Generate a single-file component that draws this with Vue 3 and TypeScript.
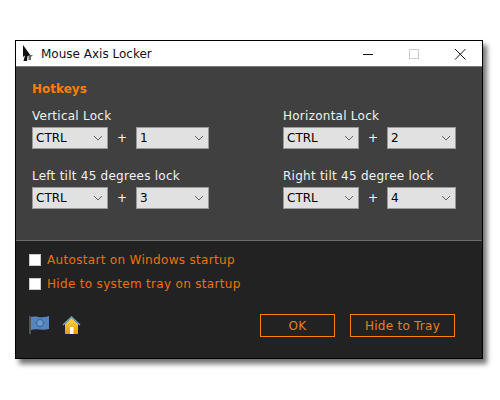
<script setup lang="ts">
const locks = [
  { label: "Vertical Lock", key: "1", keyClass: "key" },
  { label: "Horizontal Lock", key: "2", keyClass: "key-short" },
  { label: "Left tilt 45 degrees lock", key: "3", keyClass: "key" },
  { label: "Right tilt 45 degree lock", key: "4", keyClass: "key-short" },
];
const options = ["Autostart on Windows startup", "Hide to system tray on startup"];
</script>

<template>
  <div class="page">
    <div class="window">
      <div class="titlebar">
        <svg class="app-icon" width="12" height="17" viewBox="0 0 12 17">
          <path d="M1 0 L1 12 L3 10.500 L1.500 16 L5 16 L5.500 11 L9 11 Z" fill="#111" />
          <path d="M6.500 10 H11 L9 12 V15 H6.500 Z" fill="#666" />
        </svg>
        <span class="title">Mouse Axis Locker</span>
        <div class="controls">
          <svg width="14" height="14" viewBox="0 0 14 14"><path d="M2 7.500 H12" stroke="#111" stroke-width="1" /></svg>
          <svg width="14" height="14" viewBox="0 0 14 14"><rect x="2.500" y="2.500" width="9" height="9" fill="none" stroke="#ccc" /></svg>
          <svg width="14" height="14" viewBox="0 0 14 14"><path d="M2 2 L12.500 12.500 M12.500 2 L2 12.500" stroke="#111" stroke-width="1" /></svg>
        </div>
      </div>

      <div class="panel">
        <div class="heading">Hotkeys</div>
        <div class="grid">
          <div v-for="lock in locks" :key="lock.label" class="lock">
            <div class="lock-label">{{ lock.label }}</div>
            <div class="combo-row">
              <div class="combo mod">
                <span>CTRL</span>
                <svg width="10" height="6" viewBox="0 0 10 6"><path d="M1 1 L5 5 L9 1" fill="none" stroke="#666" /></svg>
              </div>
              <span class="plus">+</span>
              <div class="combo" :class="lock.keyClass">
                <span>{{ lock.key }}</span>
                <svg width="10" height="6" viewBox="0 0 10 6"><path d="M1 1 L5 5 L9 1" fill="none" stroke="#666" /></svg>
              </div>
            </div>
          </div>
        </div>
      </div>

      <div class="footer">
        <label v-for="opt in options" :key="opt" class="check">
          <span class="box"></span>
          <span>{{ opt }}</span>
        </label>
        <div class="bottom-row">
          <div class="icons">
            <svg width="20" height="19" viewBox="0 0 20 19">
              <rect x="0" y="1" width="2" height="18" fill="#555" />
              <path d="M2 2 C7 0 12 4 20 1 L20 14 C13 16 8 13 2 15 Z" fill="#5585bb" />
              <circle cx="11" cy="8" r="3.500" fill="#6f9bcd" stroke="#3f70ab" stroke-width="1.500" />
            </svg>
            <svg width="19" height="20" viewBox="0 0 19 20">
              <defs>
                <linearGradient id="wall" x1="0" y1="0" x2="0" y2="1">
                  <stop offset="0" stop-color="#ffd84a" />
                  <stop offset="1" stop-color="#e89a10" />
                </linearGradient>
              </defs>
              <path d="M3 9 L9.500 3 L16 9 L16 19 L3 19 Z" fill="url(#wall)" />
              <path d="M1 10 L9.500 2 L18 10" fill="none" stroke="#6fa3c8" stroke-width="1.600" />
              <rect x="8" y="12" width="3.500" height="7" fill="#fff" />
            </svg>
          </div>
          <div class="buttons">
            <button class="btn ok">OK</button>
            <button class="btn tray">Hide to Tray</button>
          </div>
        </div>
      </div>
    </div>
  </div>
</template>

<style>
html,
body {
  margin: 0;
  background: #fff;
}
</style>

<style scoped>
.page {
  width: 500px;
  height: 400px;
  padding: 40px 0 0 15px;
  box-sizing: border-box;
  font-family: "DejaVu Sans", sans-serif;
  font-size: 12px;
}
.window {
  width: 468px;
  height: 319px;
  box-sizing: border-box;
  border: 1px solid #000;
  box-shadow: 4px 5px 5px rgba(0, 0, 0, 0.55);
  display: flex;
  flex-direction: column;
}
.titlebar {
  height: 25px;
  background: #fff;
  display: flex;
  align-items: center;
  padding-left: 6px;
  flex: none;
}
.app-icon {
  margin-right: 7px;
}
.title {
  color: #111;
  flex: 1;
}
.controls {
  display: flex;
  gap: 32px;
  padding-right: 15px;
}
.panel {
  height: 175px;
  flex: none;
  box-sizing: border-box;
  background: #404040;
  border-bottom: 1px solid #6c6c6c;
  border-top: 1px solid #777;
  padding: 14px 0 0 16px;
}
.heading {
  color: #ff7f00;
  font-weight: bold;
  font-size: 12px;
  line-height: 16px;
}
.grid {
  display: grid;
  grid-template-columns: 251px 180px;
  row-gap: 19px;
  margin-top: 11px;
}
.lock-label {
  color: #f2f2f2;
  line-height: 16px;
  margin-bottom: 3px;
  letter-spacing: 0.25px;
}
.combo-row {
  display: flex;
  align-items: center;
}
.combo {
  height: 22px;
  box-sizing: border-box;
  background: #e1e1e1;
  border: 1px solid #999;
  color: #000;
  display: flex;
  align-items: center;
  justify-content: space-between;
  padding: 0 4px 0 3px;
}
.mod {
  width: 76px;
}
.key {
  width: 73px;
}
.key-short {
  width: 69px;
}
.plus {
  width: 28px;
  text-align: center;
  color: #fff;
}
.footer {
  flex: 1;
  background: #222;
  padding: 7px 0 0 13px;
  display: flex;
  flex-direction: column;
}
.check {
  display: flex;
  align-items: center;
  height: 24px;
  color: #f07000;
  letter-spacing: 0.32px;
}
.box {
  width: 10px;
  height: 10px;
  background: #fff;
  border: 1px solid #ccc;
  margin-right: 6px;
}
.bottom-row {
  display: flex;
  justify-content: space-between;
  margin-top: 14px;
  padding-right: 27px;
}
.icons {
  display: flex;
  gap: 13px;
  align-items: flex-start;
  margin-top: 5px;
}
.buttons {
  display: flex;
  gap: 15px;
  margin-top: 4px;
}
.btn {
  height: 23px;
  box-sizing: border-box;
  background: transparent;
  border: 1px solid #ff7f00;
  color: #e8801a;
  font-family: inherit;
  font-size: 12px;
  letter-spacing: 0.25px;
  padding: 0;
}
.ok {
  width: 75px;
}
.tray {
  width: 105px;
}
</style>
